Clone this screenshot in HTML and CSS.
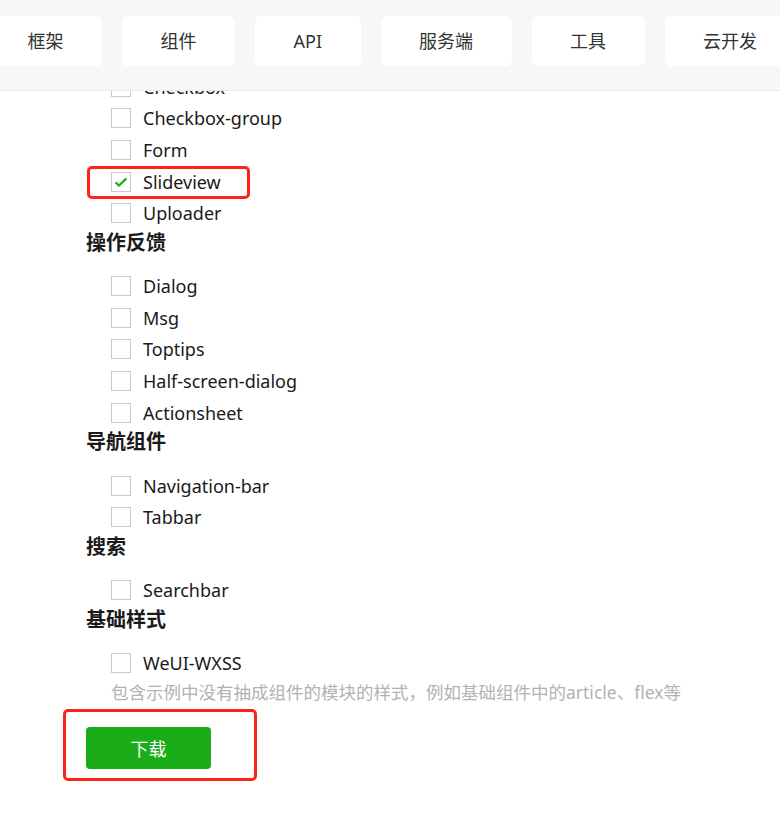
FILE: index.html
```html
<!DOCTYPE html>
<html lang="zh-CN">
<head>
<meta charset="UTF-8">
<meta name="viewport" content="width=device-width, initial-scale=1.0">
<title>WeUI 组件下载</title>
<link rel="stylesheet" href="styles.css">
</head>
<body>

<div class="topbar">
  <div class="tabs">
    <div class="tab">框架</div>
    <div class="tab">组件</div>
    <div class="tab">API</div>
    <div class="tab">服务端</div>
    <div class="tab">工具</div>
    <div class="tab">云开发</div>
  </div>
</div>

<div class="content">

  <div class="group">
    <label class="item"><span class="box"></span>Checkbox</label>
    <label class="item"><span class="box"></span>Checkbox-group</label>
    <label class="item"><span class="box"></span>Form</label>
    <label class="item marked"><span class="box checked"><svg width="14" height="14" viewBox="0 0 14 14"><path d="M1.6 7.4l3.4 3.2L12.4 3.4" fill="none" stroke="#1aad19" stroke-width="2.2"/></svg></span>Slideview
      <span class="mark"></span>
    </label>
    <label class="item"><span class="box"></span>Uploader</label>
  </div>

  <h3>操作反馈</h3>
  <div class="group">
    <label class="item"><span class="box"></span>Dialog</label>
    <label class="item"><span class="box"></span>Msg</label>
    <label class="item"><span class="box"></span>Toptips</label>
    <label class="item"><span class="box"></span>Half-screen-dialog</label>
    <label class="item"><span class="box"></span>Actionsheet</label>
  </div>

  <h3>导航组件</h3>
  <div class="group">
    <label class="item"><span class="box"></span>Navigation-bar</label>
    <label class="item"><span class="box"></span>Tabbar</label>
  </div>

  <h3>搜索</h3>
  <div class="group">
    <label class="item"><span class="box"></span>Searchbar</label>
  </div>

  <h3>基础样式</h3>
  <div class="group">
    <label class="item"><span class="box"></span>WeUI-WXSS</label>
    <p class="desc">包含示例中没有抽成组件的模块的样式，例如基础组件中的article、flex等</p>
  </div>

  <div class="actions">
    <button type="button" class="btn">下载</button>
    <span class="mark mark-btn"></span>
  </div>

</div>

</body>
</html>
```

FILE: styles.css
```css
body {
  margin: 0;
  font-family: "Noto Sans", "Noto Sans CJK SC", sans-serif;
  color: #1a1a1a;
  background-color: #fff;
}

.topbar {
  position: fixed;
  top: 0;
  left: 0;
  right: 0;
  height: 90px;
  background-color: #f7f7f7;
  border-bottom: 1px solid #e8e8e8;
  overflow: hidden;
  z-index: 10;
}

.tabs {
  display: flex;
  gap: 20px;
  margin: 16px 0 0 -11px;
  white-space: nowrap;
}

.tab {
  flex: none;
  height: 50px;
  line-height: 50px;
  padding: 0 38.5px;
  background-color: #fff;
  border-radius: 6px;
  font-size: 18px;
  color: #333;
}

.content {
  padding: 71px 0 60px 86px;
}

h3 {
  margin: 0 0 13px;
  font-size: 20px;
  line-height: 28.4px;
  font-weight: bold;
  color: #1a1a1a;
}

.group {
  padding-left: 25px;
}

.item {
  position: relative;
  display: flex;
  align-items: center;
  height: 31.6px;
  font-size: 18px;
}

.box {
  display: flex;
  align-items: center;
  justify-content: center;
  width: 18px;
  height: 18px;
  margin-right: 12px;
  border: 1px solid #c9c9ce;
  background-color: #fff;
}

.desc {
  margin: 0;
  font-size: 17.5px;
  line-height: 26px;
  color: #b2b2b2;
}

.actions {
  position: relative;
  margin-top: 22px;
}

.btn {
  display: block;
  width: 125px;
  height: 42px;
  border: none;
  border-radius: 4px;
  background-color: #1aad19;
  color: #fff;
  font-family: "Noto Sans CJK SC", sans-serif;
  font-size: 18px;
  cursor: pointer;
}

/* red annotation frames */
.mark {
  position: absolute;
  left: -24px;
  top: 0;
  width: 157px;
  height: 27px;
  border: 3px solid #ff2317;
  border-radius: 5px;
}

.mark-btn {
  left: -23px;
  top: -18px;
  width: 188px;
  height: 66px;
}
```
